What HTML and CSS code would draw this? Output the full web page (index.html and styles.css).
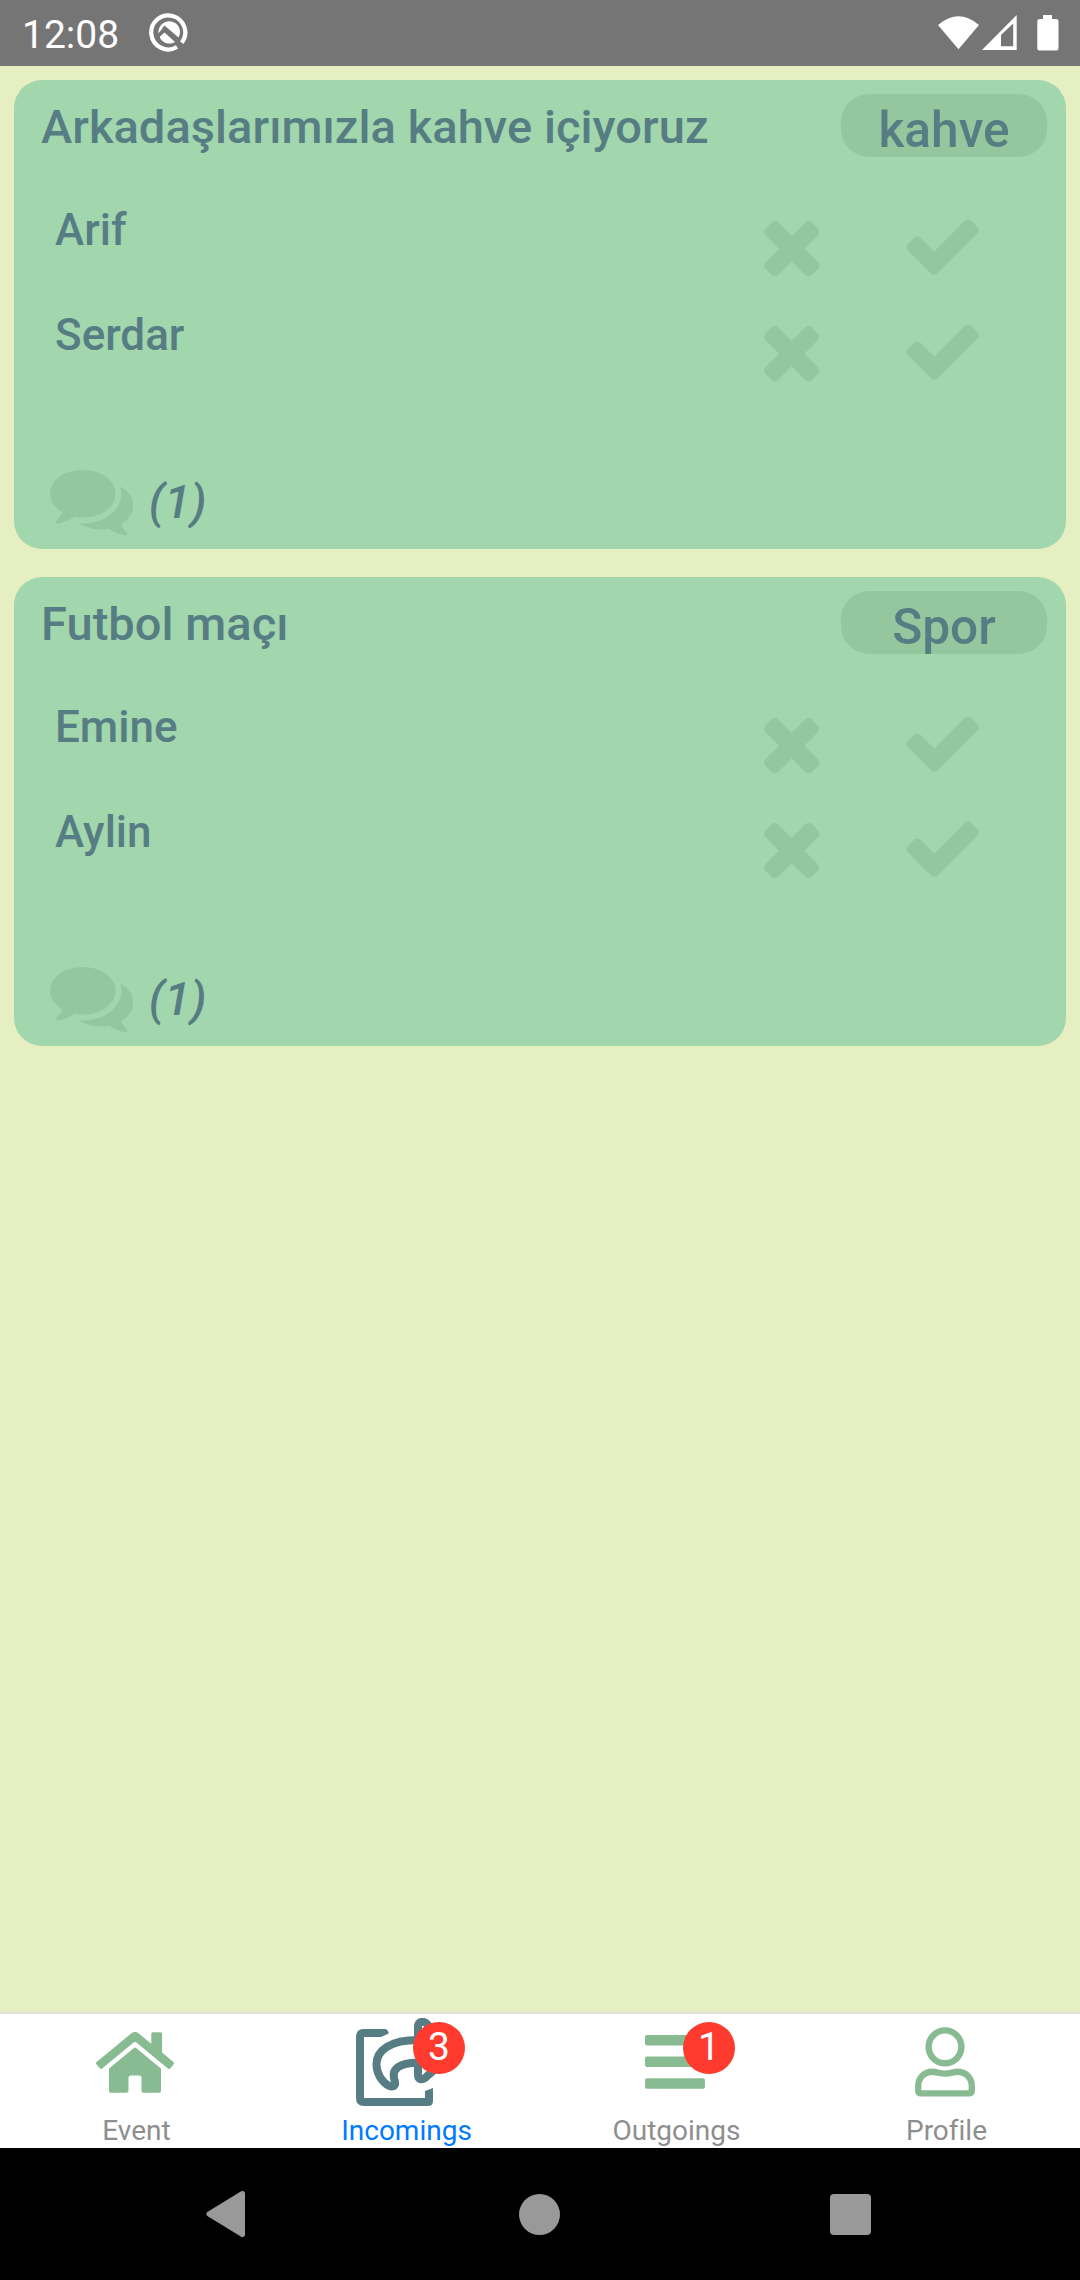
FILE: index.html
```html
<!DOCTYPE html>
<html lang="tr">
<head>
<meta charset="utf-8">
<title>Incomings</title>
<link rel="stylesheet" href="styles.css">
</head>
<body>
<svg class="defs" aria-hidden="true">
  <symbol id="times" viewBox="0 0 1792 1792"><path d="M1490 1322q0 40-28 68l-136 136q-28 28-68 28t-68-28l-294-294-294 294q-28 28-68 28t-68-28l-136-136q-28-28-28-68t28-68l294-294-294-294q-28-28-28-68t28-68l136-136q28-28 68-28t68 28l294 294 294-294q28-28 68-28t68 28l136 136q28 28 28 68t-28 68l-294 294 294 294q28 28 28 68z"/></symbol>
  <symbol id="check" viewBox="0 0 1792 1792"><path d="M1671 566q0 40-28 68l-724 724-136 136q-28 28-68 28t-68-28l-136-136-362-362q-28-28-28-68t28-68l136-136q28-28 68-28t68 28l294 295 656-657q28-28 68-28t68 28l136 136q28 28 28 68z"/></symbol>
  <symbol id="comments" viewBox="0 0 1792 1792"><path d="M1408 768q0 139-94 257t-256.500 186.500-353.500 68.500q-86 0-176-16-124 88-278 128-36 9-86 16h-3q-11 0-20.500-8t-11.500-21q-1-3-1-6.500t.5-6.500 2-6l2.500-5 3.500-5.500 4-5 4.500-5 4-4.500q5-6 23-25t26-29.500 22.500-29 25-38.500 20.500-44q-124-72-195-177t-71-224q0-139 94-257t256.500-186.500 353.500-68.500 353.500 68.500 256.500 186.500 94 257zm384 256q0 120-71 224.500t-195 176.500q10 24 20.500 44t25 38.500 22.500 29 26 29.500 23 25q1 1 4 4.500t4.500 5 4 5 3.500 5.500l2.500 5 2 6 .5 6.500-1 6.500q-3 14-13 22t-22 7q-50-7-86-16-154-40-278-128-90 16-176 16-271 0-472-132 58 4 88 4 161 0 309-45t264-129q125-92 192-212t67-257q0-77-23-152 129 71 204 178t75 230z"/></symbol>
</svg>
<div class="screen">
  <header class="status">
    <span class="clock">12:08</span>
    <svg class="q" viewBox="0 0 40 40"><path d="M28.500 34A17 17 0 1 1 33.300 29.700" fill="none" stroke="#fff" stroke-width="4.200" transform="translate(-.5 0)"/><path d="M9.500 20.500A10.800 10.800 0 1 1 29.500 24.500L15.500 12.500Z" fill="#fff"/><path d="M11 23.500L15.500 19.500 26 29A10.800 10.800 0 0 1 11 25Z" fill="#fff"/></svg>
    <svg class="sys" viewBox="0 0 124 40" fill="#fff"><path d="M0 11Q20.500-6.500 41 11L20.500 35.300Z"/><path fill-rule="evenodd" d="M44 36L78.700 1V36ZM63 21V32.300H75.200V9.500Z"/><path d="M105 1h9v4h4a2.500 2.500 0 0 1 2.500 2.500V34a2.500 2.500 0 0 1-2.500 2.500h-16A2.500 2.500 0 0 1 99.300 34V7.500A2.500 2.500 0 0 1 101.800 5h3.200z"/></svg>
  </header>
  <main class="list">
    <article class="card">
      <div class="head"><h2>Arkadaşlarımızla kahve içiyoruz</h2><span class="tag">kahve</span></div>
      <div class="row"><span class="name">Arif</span><svg><use href="#times"/></svg><svg><use href="#check"/></svg></div>
      <div class="row"><span class="name">Serdar</span><svg><use href="#times"/></svg><svg><use href="#check"/></svg></div>
      <div class="foot"><svg><use href="#comments"/></svg><span class="count">(1)</span></div>
    </article>
    <article class="card">
      <div class="head"><h2>Futbol maçı</h2><span class="tag">Spor</span></div>
      <div class="row"><span class="name">Emine</span><svg><use href="#times"/></svg><svg><use href="#check"/></svg></div>
      <div class="row"><span class="name">Aylin</span><svg><use href="#times"/></svg><svg><use href="#check"/></svg></div>
      <div class="foot"><svg><use href="#comments"/></svg><span class="count">(1)</span></div>
    </article>
  </main>
  <nav class="tabs">
    <div class="tab"><div class="icon"><svg class="home" viewBox="0 32 576 448"><path d="M280.370 148.260L96 300.110V464a16 16 0 0 0 16 16l112.060-.29a16 16 0 0 0 15.920-16V368a16 16 0 0 1 16-16h64a16 16 0 0 1 16 16v95.640a16 16 0 0 0 16 16.050L464 480a16 16 0 0 0 16-16V300L295.670 148.260a12.190 12.190 0 0 0-15.300 0zM571.600 251.470L488 182.560V44.050a12 12 0 0 0-12-12h-56a12 12 0 0 0-12 12v72.610L318.470 43a48 48 0 0 0-61 0L4.340 251.470a12 12 0 0 0-1.600 16.900l25.500 31A12 12 0 0 0 45.150 301l235.220-193.740a12.190 12.190 0 0 1 15.300 0L530.900 301a12 12 0 0 0 16.900-1.600l25.500-31a12 12 0 0 0-1.700-16.930z"/></svg></div><span>Event</span></div>
    <div class="tab active"><div class="icon"><svg class="share" viewBox="0 0 100 90" fill="none" stroke="#577d84" stroke-width="8" stroke-linejoin="round"><path d="M8 19V80H69V73L77 70V83Q77 88 72 88H8Q0 88 0 80V19Q0 11 8 11H30Q34 14 32 16L25 19Z" fill="#577d84" stroke="none"/><path d="M62 22C35 22 20 32 20.500 47C21 59 30 68 35.500 68.500C40 68 39.500 65 38.500 62C35 51 43 45 62 44.500V57C62 62 66 62 69 60L96 36L72 7C68 2 62 3 62 9Z"/></svg><b class="badge">3</b></div><span>Incomings</span></div>
    <div class="tab"><div class="icon"><svg class="bars" viewBox="0 0 60 54"><rect width="60" height="10.500" rx="2"/><rect y="21.500" width="60" height="10.500" rx="2"/><rect y="43.200" width="60" height="10.500" rx="2"/></svg><b class="badge">1</b></div><span>Outgoings</span></div>
    <div class="tab"><div class="icon"><svg class="user" viewBox="0 0 60 70" fill="none" stroke="#89bb93" stroke-width="6.400"><circle cx="30" cy="19.800" r="16.400"/><path stroke-linejoin="round" d="M6.300 66.400Q3.200 66.400 3.200 63.300V59C3.200 51 9.500 44.700 17.500 44.700C22 44.700 24 46.600 30 46.600S38 44.700 42.500 44.700C50.500 44.700 56.800 51 56.800 59V63.300Q56.800 66.400 53.700 66.400Z"/></svg></div><span>Profile</span></div>
  </nav>
  <footer class="keys">
    <svg viewBox="0 0 40 46"><path d="M36.500 2.500L3 23L36.500 43.500Z" stroke="#999" stroke-width="5" stroke-linejoin="round"/></svg>
    <i class="round"></i>
    <i class="square"></i>
  </footer>
</div>
</body>
</html>
```
FILE: styles.css
```css
* { box-sizing: border-box; }
body { margin: 0; font-family: Roboto, sans-serif; }
.defs { display: none; }
.screen { width: 1080px; height: 2280px; display: flex; flex-direction: column; background: #e6efc1; }
svg { display: block; flex: none; }

.status { height: 66px; background: #757575; color: #fff; display: flex; align-items: flex-start; padding: 0 18px 0 22px; }
.clock { font-size: 39px; line-height: 70px; width: 127px; }
.q { width: 40px; height: 40px; margin-top: 13px; }
.sys { width: 124px; height: 40px; margin: 14px 0 0 auto; }

.list { flex: 1; display: flex; flex-direction: column; gap: 28px; padding: 14px; }
.card { height: 469px; border-radius: 28px; background: #a2d6ac; color: #577d84; padding: 14px 19px 0 27px; font-weight: 500; }
.card svg { width: 83.4px; height: 83.4px; fill: #95c79e; }
.head { display: flex; justify-content: space-between; height: 103px; }
.head h2 { margin: 0; font-size: 47px; font-weight: 500; line-height: 66px; letter-spacing: .06px; white-space: nowrap; }
.tag { width: 206px; height: 63px; border-radius: 28px; background: #95c79e; text-align: center; font-size: 49.6px; line-height: 72px; overflow: hidden; }
.row { display: flex; height: 105px; padding: 7px 62.6px 0 14px; }
.name { flex: 1; font-size: 44px; line-height: 52px; }
.row svg + svg { margin-left: 67.6px; }
.foot { display: flex; padding: 51px 0 0 9px; }
.count { margin-left: 15.4px; font-size: 47px; line-height: 88px; font-style: italic; }

.tabs { height: 136px; background: #fff; border-top: 2px solid #dfe2d6; display: grid; grid-template-columns: repeat(4, 1fr); color: #8e8e8f; text-align: center; }
.tab { padding-left: 3px; font-size: 28px; }
.active { color: #007aff; }
.icon { position: relative; display: flex; justify-content: center; align-items: flex-start; height: 98px; fill: #89bb93; }
.tab > span { display: block; line-height: 38px; }
.home { width: 78px; height: 61px; margin: 18px 4px 0 0; }
.share { width: 100px; height: 90px; margin: 4px 2px 0 0; }
.bars { width: 60px; height: 54px; margin: 21px 4px 0 0; }
.user { width: 60px; height: 70px; margin: 13px 4px 0 0; }
.badge { position: absolute; left: 140px; top: 8px; width: 52px; height: 52px; border-radius: 50%; background: #ff3b30; color: #fff; font-size: 39px; font-weight: 400; line-height: 50px; }

.keys { height: 132px; background: #000; display: grid; grid-template-columns: 40px 41px 41px; justify-content: space-between; align-items: center; padding: 0 209px 0 206px; }
.keys svg { width: 40px; height: 46px; fill: #999; }
.keys i { height: 41px; background: #999; }
.round { border-radius: 50%; position: relative; left: 1px; }
.square { border-radius: 4px; }
```
